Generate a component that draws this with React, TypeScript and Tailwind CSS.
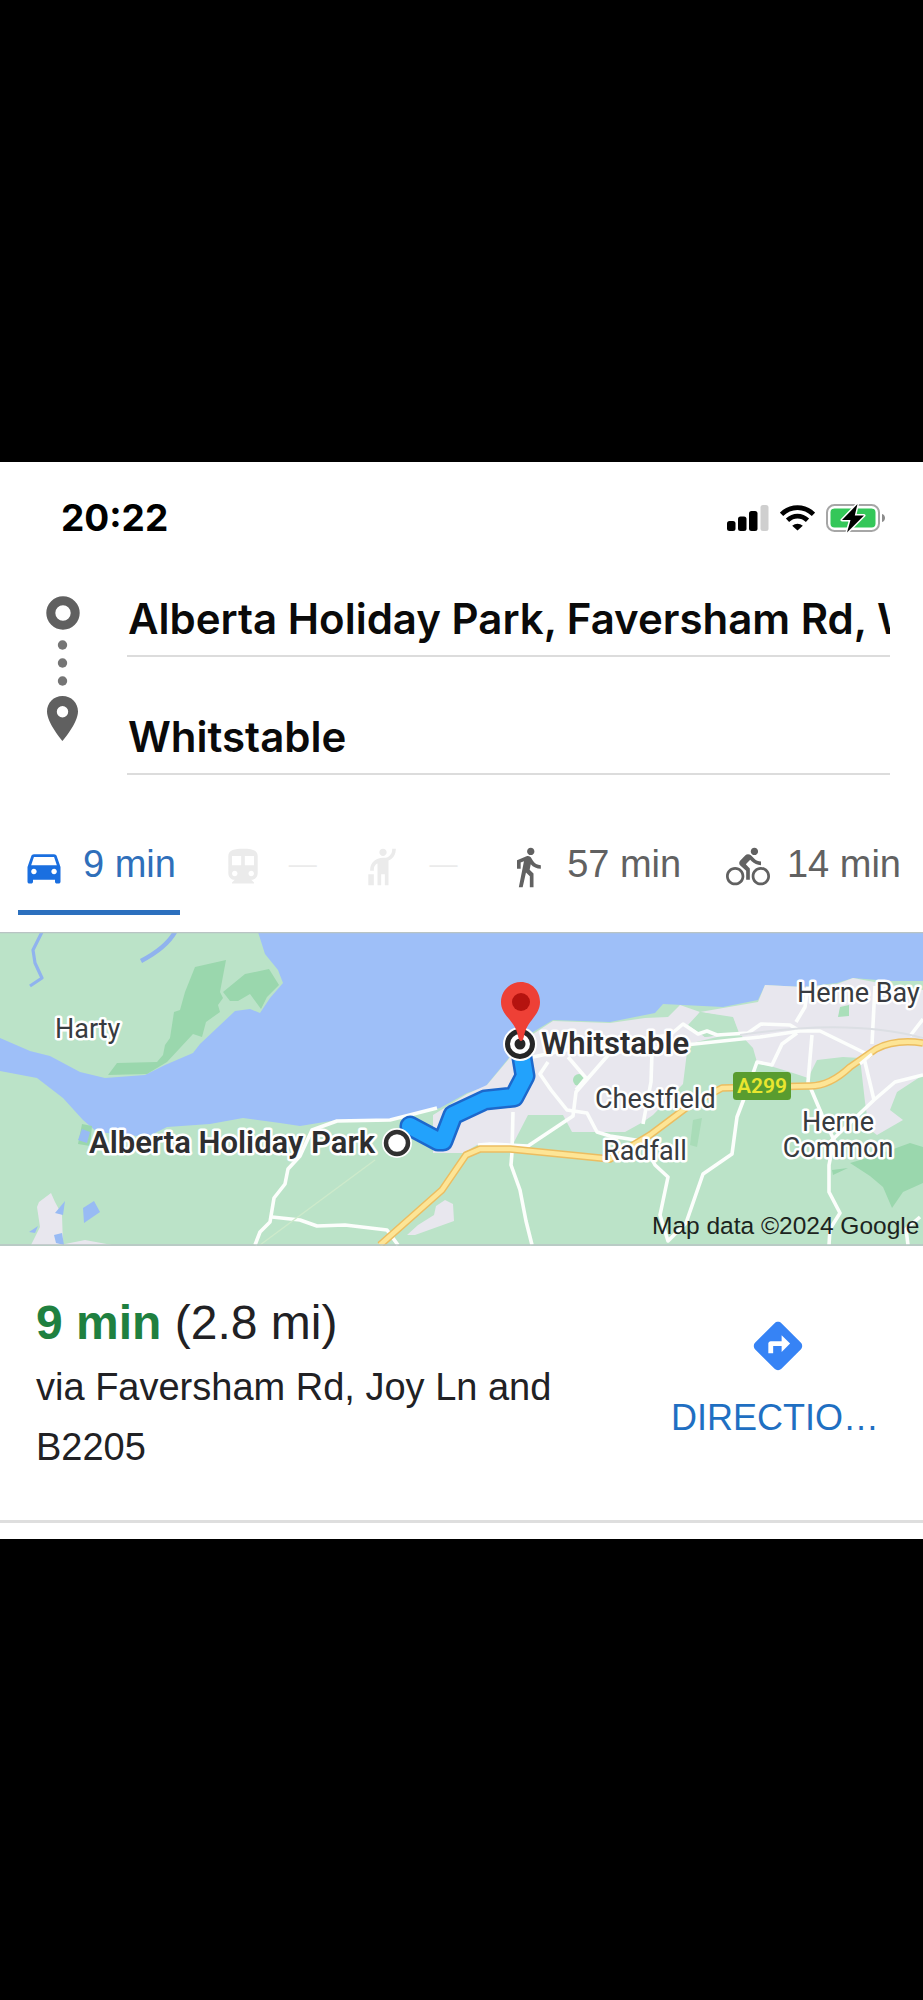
import type { ReactNode } from "react";
import {
  MdDirections,
  MdDirectionsBike,
  MdDirectionsCar,
  MdDirectionsSubway,
  MdDirectionsWalk,
  MdHail,
} from "react-icons/md";

function StatusBar() {
  return (
    <header className="flex h-28 items-center justify-between pr-[37px] pl-[61px]">
      <time className="font-['Inter',sans-serif] text-[37px] leading-none font-bold text-black">20:22</time>
      <div className="flex items-center gap-[11px]">
        <svg className="h-[26px] w-[42px]" viewBox="0 0 42 26" role="img" aria-label="Signal">
          <rect x="0" y="16" width="8.500" height="10" rx="2.500" fill="#000" />
          <rect x="11" y="11.500" width="8.500" height="14.500" rx="2.500" fill="#000" />
          <rect x="22" y="6" width="8.500" height="20" rx="2.500" fill="#000" />
          <rect x="33.500" y="0" width="8" height="26" rx="2.500" fill="#cfcfcf" />
        </svg>
        <svg className="h-[26px] w-[35px]" viewBox="0 0 35 26" role="img" aria-label="Wi-Fi" fill="none" stroke="#000">
          <path d="M1.500 9.300C10.500 0.300 24.500 0.300 33.500 9.300" strokeWidth="4.800" />
          <path d="M7.500 15.300C13.500 9.800 21.500 9.800 27.500 15.300" strokeWidth="4.800" />
          <path d="M17.500 25.500L12.200 20.700C15.300 18 19.700 18 22.800 20.700Z" fill="#000" stroke="none" />
        </svg>
        <svg className="h-[30px] w-[60px]" viewBox="0 0 60 30" role="img" aria-label="Battery charging">
          <rect x="1" y="2" width="52" height="26" rx="7.500" fill="#fff" stroke="#a6a6a6" strokeWidth="2" />
          <rect x="4.500" y="5.500" width="45" height="19" rx="4" fill="#34c759" />
          <path d="M56 11c4 1 4 7 0 8z" fill="#8c8c8c" />
          <path
            d="M31.500 1L16 17H24.500L21 29.500L38 12.500H28.800Z"
            fill="#000"
            stroke="#fff"
            strokeWidth="3"
            strokeLinejoin="round"
            paintOrder="stroke"
          />
        </svg>
      </div>
    </header>
  );
}

function RouteMarks() {
  return (
    <svg className="mt-[21px] ml-[45px] h-[148px] w-9 shrink-0" viewBox="0 0 36 148" aria-hidden="true">
      <circle cx="18" cy="18" r="12.200" fill="none" stroke="#606060" strokeWidth="9" />
      <g fill="#757575">
        <circle cx="17.500" cy="50" r="4.700" />
        <circle cx="17.500" cy="68" r="4.700" />
        <circle cx="17.500" cy="86" r="4.700" />
      </g>
      <path
        fill="#606060"
        fillRule="evenodd"
        d="M17.500 101C8.700 101 2 107.800 2 116.500C2 128 17.500 146 17.500 146C17.500 146 33 128 33 116.500C33 107.800 26.300 101 17.500 101ZM17.500 111A5.700 5.700 0 1 1 17.500 122.400A5.700 5.700 0 1 1 17.500 111Z"
      />
    </svg>
  );
}

const fieldClass =
  "block h-[83px] w-full min-w-0 rounded-none border-b-2 border-[#dcdcdc] bg-transparent pt-2 pl-px font-['Inter',sans-serif] text-[42px] font-semibold text-[#0a0a0a] outline-none";

function RouteForm() {
  return (
    <form className="flex pr-[33px]">
      <RouteMarks />
      <div className="ml-[46px] flex min-w-0 flex-1 flex-col gap-[35px]">
        <input
          className={fieldClass}
          aria-label="Starting point"
          defaultValue="Alberta Holiday Park, Faversham Rd, Whitstable"
        />
        <input className={fieldClass} aria-label="Destination" defaultValue="Whitstable" />
      </div>
    </form>
  );
}

function Mode({ label, icon, time, tone }: { label: string; icon: ReactNode; time?: string; tone: string }) {
  return (
    <button type="button" aria-label={time ? `${label}, ${time}` : label} className={`flex h-[91px] items-center border-b-5 ${tone}`}>
      {icon}
      {time ? (
        <span className="ml-[17px] pb-1.5 text-[38px] leading-none whitespace-nowrap">{time}</span>
      ) : (
        <span className="ml-6 pb-1.5 text-[28px] leading-none">—</span>
      )}
    </button>
  );
}

function TravelModes() {
  return (
    <nav className="flex justify-between pt-[49px] pr-[22px] pb-[17px] pl-[18px]" aria-label="Travel modes">
      <Mode
        label="Drive"
        icon={<MdDirectionsCar className="size-11 text-[#1a6fe0]" />}
        time="9 min"
        tone="border-[#2c70be] px-1 text-[#2f6fba]"
      />
      <Mode label="Transit" icon={<MdDirectionsSubway className="size-11" />} tone="-ml-1 border-transparent text-[#ebebeb]" />
      <Mode label="Ride" icon={<MdHail className="size-11" />} tone="border-transparent pr-1 text-[#ebebeb]" />
      <Mode
        label="Walk"
        icon={<MdDirectionsWalk className="size-11" />}
        time="57 min"
        tone="border-transparent text-[#616161]"
      />
      <Mode
        label="Cycle"
        icon={<MdDirectionsBike className="size-11" />}
        time="14 min"
        tone="border-transparent text-[#616161]"
      />
    </nav>
  );
}

function RouteMap() {
  return (
    <svg className="block h-auto w-full" viewBox="0 0 923 314" role="img" aria-label="Route map">
      <rect width="923" height="314" fill="#bbe3c8" />

      <path
        fill="#9ebff8"
        d="M0 106L30 119L50 124L80 140L105 146L145 143L165 133L193 121L200 112L235 79L250 77L260 81L270 66L283 51L278 38L265 22L258 0H923V49H890L853 46L837 51L803 55L765 53L758 68L723 75L663 72L655 81L610 90L553 88L533 100L522 108L508 127L485 155L467 161L440 176L390 187L337 188L300 194L280 191L243 186L210 192L167 195L147 205L97 200L83 188L63 166L37 146L0 139Z"
      />

      <g fill="#9ad7ad">
        <path d="M226 28L195 35L185 60L180 78L174 80L170 106L165 113L163 123L157 130L117 131L108 143L147 142L167 130L193 102L202 105L206 90L220 80L218 73L223 66L220 60Z" />
        <path d="M223 60L245 42L269 37L279 53L267 65L261 77L250 62L238 69L230 69Z" />
        <path d="M850 231L877 223L910 211L923 215V251L903 260L892 276L883 255L870 244Z" />
        <path d="M832 238L848 236L833 243Z" />
        <path d="M82 192L92 194L90 214L78 212Z" />
        <path d="M693 188L702 186L697 215L690 213Z" fill="#a9dcb8" />
      </g>

      <g fill="none" stroke="#90b3ee" strokeWidth="3.200" strokeLinejoin="round">
        <path d="M42 0L33 18L35 31L42 46L30 54" />
        <path d="M175 0Q166 16 141 29" strokeWidth="4.500" />
      </g>

      <g fill="#e8e7ee">
        <path d="M533 102L553 89L610 91L645 86L668 85L680 73L700 80L688 93L705 105L738 100L688 112L683 152L653 183L643 190L625 200H572L563 183H528L513 212L477 213L463 221H433V183L467 162L487 153L508 128L522 108Z" />
        <path d="M765 53L803 55L837 52L853 46L890 53L923 58V143L897 160L890 178L903 188L877 203L869 197L865 170L860 126L843 125L817 128L808 146L790 140L757 130L753 116L738 100L733 86L700 80L758 70Z" />
        <path d="M51 261L55 270L62 283L63 313H31L40 295L37 275L39 270Z" />
        <path d="M60 313L85 308L112 313Z" />
        <path d="M436 274L445 268L453 272L454 289L415 303H407L418 293L434 283Z" />
      </g>
      <path fill="#bbe3c8" d="M690 93L700 80L733 85L739 101L705 105Z" />

      <g fill="#98bbf4">
        <path d="M65 269L63 283L55 281ZM94 269L100 280L84 291L83 276ZM54 303L62 301L64 313L56 311ZM29 300L38 294L35 301ZM82 197L90 200L87 211L78 208Z" />
      </g>
      <g fill="#aadfba">
        <circle cx="579" cy="148" r="6" />
        <path d="M840 75L849 73V84L838 85Z" />
      </g>

      <g fill="none" stroke="#fcfefc" strokeWidth="3.600" strokeLinejoin="round">
        <path d="M255 313L260 300L270 290L274 266L285 252L288 237L300 224L312 198L337 189L390 188L437 176" />
        <path d="M272 285L300 288L317 294L345 293L387 298L398 313" />
        <path d="M513 180L512 220L511 233L520 258L526 289L532 313" />
        <path d="M478 213L490 212L528 214L573 184L576 160L610 121L760 105L800 99H820L867 122" />
        <path d="M533 125L575 116L670 103L683 92L698 102L707 99L717 103L748 101L761 92L790 93L800 99" />
        <path d="M568 125L586 146L576 158M548 130L540 142L551 158L567 178L587 181L597 200L610 204L642 209L655 233L668 245L660 283L668 309L686 291L703 242L732 222L737 185L745 164L757 130L772 133L782 112L797 101" />
        <path d="M652 120L651 150L643 192M812 103L808 150L822 183L834 208L829 233V260L840 281L830 297L829 313" />
        <path d="M808 55L805 75L796 90M875 54L872 112M864 126L874 168L830 210M874 168L895 150L923 143M910 104L923 87M908 313L906 297L920 285" />
      </g>
      <path d="M740 103Q850 86 923 106" fill="none" stroke="#dcdfe4" strokeWidth="2" />
      <path d="M260 313L375 228" fill="none" stroke="#cdeacb" strokeWidth="1.500" />

      <g fill="none" strokeLinejoin="round">
        <path
          d="M380 313L442 258L466 223L480 217H510L610 227L650 203L690 173L722 156L810 154Q830 154 850 135L876 117Q895 107 923 111"
          stroke="#ecbd60"
          strokeWidth="7.500"
        />
        <path
          d="M380 313L442 258L466 223L480 217H510L610 227L650 203L690 173L722 156L810 154Q830 154 850 135L876 117Q895 107 923 111"
          stroke="#fde596"
          strokeWidth="4.500"
        />
        <path d="M860 132L872 122" stroke="#fcfefc" strokeWidth="3" />
      </g>

      <g fill="none" strokeLinejoin="round" strokeLinecap="round">
        <path d="M410 194L438 209H443L453 183L485 168L514 165L525 144L522 126" stroke="#1d68cb" strokeWidth="21" />
        <path d="M410 194L438 209H443L453 183L485 168L514 165L525 144L522 126" stroke="#22a2fc" strokeWidth="16" />
      </g>

      <circle cx="397" cy="211" r="15" fill="#fff" />
      <circle cx="397" cy="211" r="11" fill="#fff" stroke="#303030" strokeWidth="4.500" />
      <circle cx="520" cy="112" r="17" fill="#fff" />
      <circle cx="520" cy="112" r="12.500" fill="#fff" stroke="#262626" strokeWidth="5" />
      <circle cx="520" cy="112" r="5.500" fill="#262626" />
      <path
        d="M521 50C510 50 501 59 501 70C501 84 515 88 518 104Q519 109 521 109Q523 109 524 104C527 88 540 84 540 70C540 59 532 50 521 50Z"
        fill="#ee4036"
      />
      <circle cx="521" cy="70" r="9" fill="#b5130f" />

      <rect x="733" y="140" width="58" height="28" rx="3.500" fill="#599c2f" />

      <g
        className="font-['Roboto',sans-serif]"
        fontSize="27"
        fill="#383b40"
        stroke="#fff"
        strokeWidth="5"
        strokeLinejoin="round"
        paintOrder="stroke"
      >
        <text x="55" y="106">Harty</text>
        <text x="595" y="176">Chestfield</text>
        <text x="603" y="228">Radfall</text>
        <text x="797" y="70">Herne Bay</text>
        <text x="838" y="199" textAnchor="middle">Herne</text>
        <text x="838" y="225" textAnchor="middle">Common</text>
        <g fontSize="31" fontWeight="600" fill="#2e2e30">
          <text x="89" y="221">Alberta Holiday Park</text>
          <text x="541" y="122">Whitstable</text>
        </g>
      </g>
      <text x="762" y="161" textAnchor="middle" className="font-['Roboto',sans-serif]" fontSize="21" fontWeight="600" fill="#e9e62f">
        A299
      </text>
      <text x="652" y="302" className="font-['Liberation_Sans',Arial,sans-serif]" fontSize="24.500" fill="#1c2420">
        Map data ©2024 Google
      </text>
      <path d="M0 0.500H923M0 313H923" stroke="#b9c4c4" strokeWidth="1.500" />
    </svg>
  );
}

function RouteSummary() {
  return (
    <section className="flex items-center justify-between border-b-3 border-[#dedede] py-[43px] pr-[38px] pl-9">
      <div className="w-[530px] text-[38px] leading-[60px] text-[#212124]">
        <h1 className="text-5xl leading-[68px]">
          <strong className="font-bold text-[#1f8040]">9 min</strong> (2.8 mi)
        </h1>
        <p>via Faversham Rd, Joy Ln and B2205</p>
      </div>
      <a href="#directions" className="flex w-[214px] flex-col items-center gap-[21px] pb-2 text-[#1f6fc2]">
        <MdDirections className="size-[58px] text-[#3683f5]" />
        <span className="w-full truncate text-4xl leading-[44px]">DIRECTIONS</span>
      </a>
    </section>
  );
}

export default function App() {
  return (
    <div className="flex min-h-screen flex-col justify-center bg-black font-['Liberation_Sans',Arial,sans-serif]">
      <main className="bg-white pb-4">
        <StatusBar />
        <RouteForm />
        <TravelModes />
        <RouteMap />
        <RouteSummary />
      </main>
    </div>
  );
}
